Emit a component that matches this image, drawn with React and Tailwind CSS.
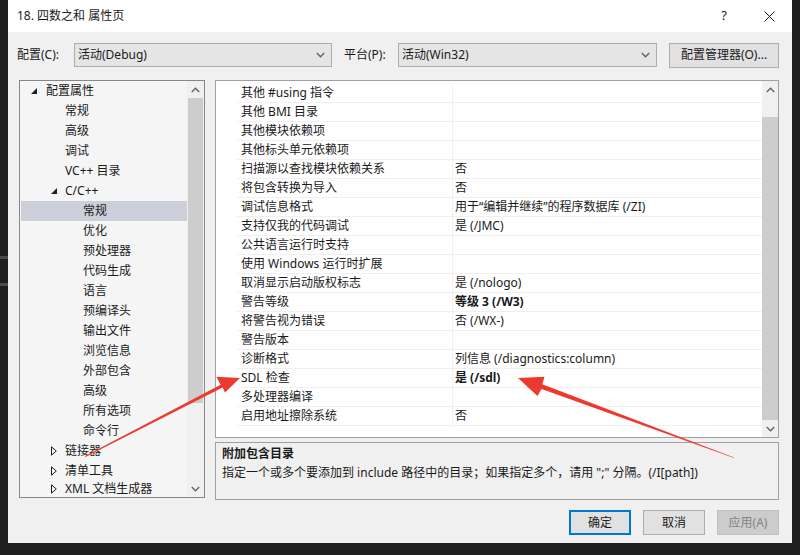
import React from 'react';

const FONT = { fontFamily: '"Noto Sans", "Noto Sans CJK SC", sans-serif' };

const treeRows = [
  { label: '配置属性', level: 0, open: true },
  { label: '常规', level: 1 },
  { label: '高级', level: 1 },
  { label: '调试', level: 1 },
  { label: 'VC++ 目录', level: 1 },
  { label: 'C/C++', level: 1, open: true },
  { label: '常规', level: 2, selected: true },
  { label: '优化', level: 2 },
  { label: '预处理器', level: 2 },
  { label: '代码生成', level: 2 },
  { label: '语言', level: 2 },
  { label: '预编译头', level: 2 },
  { label: '输出文件', level: 2 },
  { label: '浏览信息', level: 2 },
  { label: '外部包含', level: 2 },
  { label: '高级', level: 2 },
  { label: '所有选项', level: 2 },
  { label: '命令行', level: 2 },
  { label: '链接器', level: 1, closed: true },
  { label: '清单工具', level: 1, closed: true },
  { label: 'XML 文档生成器', level: 1, closed: true },
];

const props = [
  ['其他 #using 指令', ''],
  ['其他 BMI 目录', ''],
  ['其他模块依赖项', ''],
  ['其他标头单元依赖项', ''],
  ['扫描源以查找模块依赖关系', '否'],
  ['将包含转换为导入', '否'],
  ['调试信息格式', '用于“编辑并继续”的程序数据库 (/ZI)'],
  ['支持仅我的代码调试', '是 (/JMC)'],
  ['公共语言运行时支持', ''],
  ['使用 Windows 运行时扩展', ''],
  ['取消显示启动版权标志', '是 (/nologo)'],
  ['警告等级', '等级 3 (/W3)', true],
  ['将警告视为错误', '否 (/WX-)'],
  ['警告版本', ''],
  ['诊断格式', '列信息 (/diagnostics:column)'],
  ['SDL 检查', '是 (/sdl)', true],
  ['多处理器编译', ''],
  ['启用地址擦除系统', '否'],
];

function Chevron({ up = false, className = '' }) {
  return (
    <svg width="9" height="6" viewBox="0 0 9 6" className={className}>
      <path
        d={up ? 'M0.8 5 L4.5 1.2 L8.2 5' : 'M0.8 1 L4.5 4.8 L8.2 1'}
        fill="none"
        stroke="#606060"
        strokeWidth="1.3"
      />
    </svg>
  );
}

function Combo({ text, width }) {
  return (
    <div className={`${width} h-[24px] bg-[#e5e5e5] border border-[#adadad] flex items-center pl-[3px] pr-[6px]`}>
      <span className="flex-1">{text}</span>
      <Chevron />
    </div>
  );
}

function TreeRow({ row, last }) {
  const pad = row.level === 0 ? 'pl-[10px]' : row.level === 1 ? (row.open || row.closed ? 'pl-[30px]' : 'pl-[44px]') : 'pl-[62px]';
  return (
    <div className={`${last ? 'h-[16px] pb-[1px]' : 'h-[20px]'} flex items-center ml-[1px] ${pad} ${row.selected ? 'bg-[#cdd0db]' : ''}`}>
      {row.open && (
        <span className={`flex items-center ${row.level === 0 ? 'w-[15px]' : 'w-[14px]'}`}>
          <svg width="6" height="6" viewBox="0 0 6 6">
            <polygon points="6,0 6,6 0,6" fill="#1e1e1e" />
          </svg>
        </span>
      )}
      {row.closed && (
        <span className="flex items-center w-[14px]">
          <svg width="6" height="10" viewBox="0 0 6 10">
            <polygon points="0.5,0.8 5.3,5 0.5,9.2" fill="none" stroke="#1e1e1e" strokeWidth="1" />
          </svg>
        </span>
      )}
      <span className="whitespace-nowrap">{row.label}</span>
    </div>
  );
}

function Arrows() {
  return (
    <svg className="absolute left-0 top-0 pointer-events-none" width="800" height="555" viewBox="0 0 800 555">
      <polygon
        points="85,456 220.6,384.8 216.4,376.8 240,378 225,392.6 222.6,387.6 85.4,457"
        fill="#ec3a2f"
      />
      <polygon
        points="734,458 541.6,388.9 537.5,396 518,378 544.5,376.8 542.3,384.2 734,457.4"
        fill="#ec3a2f"
      />
    </svg>
  );
}

export default function App() {
  return (
    <div className="relative w-[800px] h-[555px] bg-[#1e1e1e] flex text-[12px] text-[#1a1a1a] overflow-hidden" style={FONT}>
      {/* background app strip on the left */}
      <div className="w-[8px] flex flex-col">
        <div className="h-[256px]" />
        <div className="h-[3px] bg-[#4a4a4a]" />
        <div className="h-[24px]" />
        <div className="h-[3px] bg-[#4a4a4a]" />
      </div>

      <div className="w-[784px] h-[543px] bg-[#f0f0f0] flex flex-col">
        {/* title bar */}
        <div className="h-[32px] bg-white flex items-center pl-[9px] pr-[17px]">
          <span className="flex-1">18. 四数之和 属性页</span>
          <span className="text-[13px] mr-[37px]">?</span>
          <svg width="11" height="11" viewBox="0 0 11 11">
            <path d="M0.5 0.5 L10.5 10.5 M10.5 0.5 L0.5 10.5" stroke="#1a1a1a" strokeWidth="1" />
          </svg>
        </div>

        {/* configuration toolbar */}
        <div className="mt-[10px] h-[26px] flex items-center pl-[9px]">
          <span className="w-[57px]">配置(C):</span>
          <Combo text="活动(Debug)" width="w-[258px]" />
          <span className="ml-[12px] w-[54px]">平台(P):</span>
          <Combo text="活动(Win32)" width="w-[259px]" />
          <div className="ml-[12px] w-[110px] h-[25px] bg-[#e1e1e1] border border-[#adadad] flex items-center justify-center">
            配置管理器(O)...
          </div>
        </div>

        {/* main area */}
        <div className="mt-[12px] flex pl-[11px]">
          {/* tree */}
          <div className="w-[186px] h-[418px] border border-[#828790] bg-[#f5f5f5] flex">
            <div className="flex-1 overflow-hidden">
              {treeRows.map((r, i) => (
                <TreeRow key={i} row={r} last={i === treeRows.length - 1} />
              ))}
            </div>
            <div className="w-[17px] bg-[#f0f0f0] flex flex-col">
              <div className="h-[17px] flex items-center justify-center">
                <Chevron up />
              </div>
              <div className="flex-1 flex justify-center">
                <div className="w-[15px] h-[305px] bg-[#cdcdcd]" />
              </div>
              <div className="h-[17px] flex items-center justify-center">
                <Chevron />
              </div>
            </div>
          </div>

          <div className="ml-[10px] w-[564px] flex flex-col">
            {/* property grid */}
            <div className="h-[358px] border border-[#a0a0a0] bg-white flex">
              <div className="flex-1 pt-[3px]">
                {props.map(([name, value, bold], i) => (
                  <div key={i} className="h-[19px] flex">
                    <div className="w-[21px]" />
                    <div className="flex-1 flex border-b border-[#f0f0f0]">
                      <div className="w-[215px] pl-[4px] flex items-center whitespace-nowrap">{name}</div>
                      <div className={`flex-1 border-l border-[#f0f0f0] pl-[2px] flex items-center whitespace-nowrap ${bold ? 'font-bold' : ''}`}>
                        {value}
                      </div>
                    </div>
                  </div>
                ))}
              </div>
              <div className="w-[16px] bg-[#f0f0f0] flex flex-col">
                <div className="h-[17px] flex items-center justify-center">
                  <Chevron up />
                </div>
                <div className="flex-1 pt-[19px]">
                  <div className="h-[303px] bg-[#cdcdcd]" />
                </div>
                <div className="h-[17px] flex items-center justify-center">
                  <Chevron />
                </div>
              </div>
            </div>

            {/* description */}
            <div className="mt-[4px] h-[58px] border border-[#a0a0a0] bg-[#f0f0f0] pl-[6px] pt-[1px] leading-[19px]">
              <div className="font-bold">附加包含目录</div>
              <div className="whitespace-nowrap">
                指定一个或多个要添加到 include 路径中的目录；如果指定多个，请用 ";" 分隔。(/I[path])
              </div>
            </div>
          </div>
        </div>

        {/* buttons */}
        <div className="mt-[10px] flex justify-end pr-[13px] gap-[12px]">
          <div className="w-[62px] h-[25px] bg-[#e1e1e1] border-2 border-[#0078d7] flex items-center justify-center">确定</div>
          <div className="w-[62px] h-[25px] bg-[#e1e1e1] border border-[#adadad] flex items-center justify-center">取消</div>
          <div className="w-[62px] h-[25px] bg-[#cccccc] border border-[#bfbfbf] text-[#838383] flex items-center justify-center">应用(A)</div>
        </div>
      </div>

      <Arrows />
    </div>
  );
}
